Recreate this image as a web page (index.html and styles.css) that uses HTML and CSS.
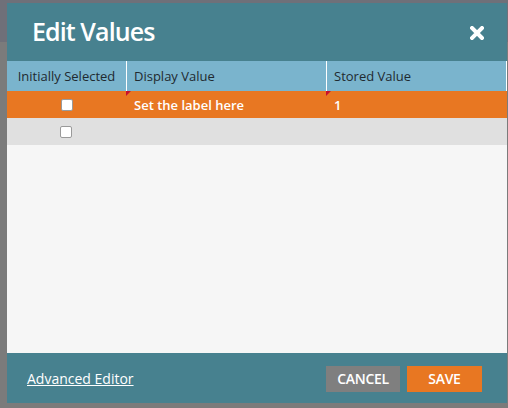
FILE: index.html
```html
<!DOCTYPE html>
<html>
<head>
<meta charset="utf-8">
<link rel="stylesheet" href="styles.css">
</head>
<body>
<div class="backdrop">
  <div class="dialog">
    <div class="header">
      <div class="title">Edit Values</div>
      <svg class="close" width="14" height="14" viewBox="0 0 14 14"><path d="M2 2 L12 12 M12 2 L2 12" stroke="#fff" stroke-width="4" stroke-linecap="square"/></svg>
    </div>
    <div class="grid">
      <div class="row head">
        <div class="cell c1">Initially Selected</div>
        <div class="cell c2">Display Value</div>
        <div class="cell c3">Stored Value</div>
      </div>
      <div class="row sel">
        <div class="cell c1"><span class="box"></span></div>
        <div class="cell c2 dirty">Set the label here</div>
        <div class="cell c3 dirty">1</div>
      </div>
      <div class="row alt">
        <div class="cell c1"><span class="box"></span></div>
        <div class="cell c2"></div>
        <div class="cell c3"></div>
      </div>
      <div class="body"></div>
    </div>
    <div class="footer">
      <a class="adv" href="#">Advanced Editor</a>
      <div class="buttons">
        <button class="btn cancel">CANCEL</button>
        <button class="btn save">SAVE</button>
      </div>
    </div>
  </div>
</div>
</body>
</html>
```
FILE: styles.css
```css
html, body { margin: 0; padding: 0; }
body {
  width: 508px; height: 408px; overflow: hidden;
  background: linear-gradient(#6f7079 0, #6f7079 42px, #7b7b7b 42px);
  font-family: "Open Sans", "Liberation Sans", sans-serif;
}
.backdrop { padding: 3px 0 0 7px; }
.dialog {
  width: 500px; height: 400px;
  display: flex; flex-direction: column;
  background: #f6f6f6;
}
.header {
  height: 58px; background: #47818f;
  display: flex; align-items: center; justify-content: space-between;
  padding: 0 23px 0 25px; box-sizing: border-box;
}
.title { color: #fff; font-size: 25px; font-weight: 600; letter-spacing: -0.9px; line-height: 1; margin-top: -2px; }
.close { display: block; margin-top: 2px; }
.grid { flex: 1; display: flex; flex-direction: column; }
.row { display: flex; height: 27px; }
.row.head { height: 30px; background: #7ab4cd; color: #1f2a30; }
.cell {
  font-size: 13px; display: flex; align-items: center;
  box-sizing: border-box; position: relative;
}
.c1 { width: 119px; justify-content: center; }
.c2 { width: 200px; padding-left: 7px; }
.c3 { width: 181px; padding-left: 7px; }
.head .c2, .head .c3 { border-left: 1px solid #fff; }
.head .c3 { border-right: 1px solid #fff; }
.row.sel { background: #e87722; color: #fff; font-weight: 600; }
.sel .c2, .sel .c3 { padding-left: 8px; }
.row.alt { background: #e0e0e0; }
.alt .c2, .alt .c3 { margin-left: 1px; }
.dirty::before {
  content: ""; position: absolute; left: 0; top: 0;
  border-top: 5px solid #c8102e; border-right: 5px solid transparent;
}
.box {
  width: 12px; height: 12px; box-sizing: border-box;
  background: #fff; border: 1px solid #9a9a9a; border-radius: 2px;
}
.body { flex: 1; }
.footer {
  height: 50px; background: #47818f;
  display: flex; align-items: center; justify-content: space-between;
  padding: 0 25px 0 20px; box-sizing: border-box;
}
.adv { color: #fff; font-size: 14px; text-decoration: underline; margin-top: 1px; }
.buttons { display: flex; gap: 7px; margin-top: 1px; }
.btn {
  height: 26px; border: none; color: #fff; font-family: inherit;
  font-size: 14px; font-weight: 600; letter-spacing: -0.3px; padding: 0; cursor: pointer;
}
.cancel { width: 74px; background: #7f7f7f; }
.save { width: 75px; background: #e87722; }
```
